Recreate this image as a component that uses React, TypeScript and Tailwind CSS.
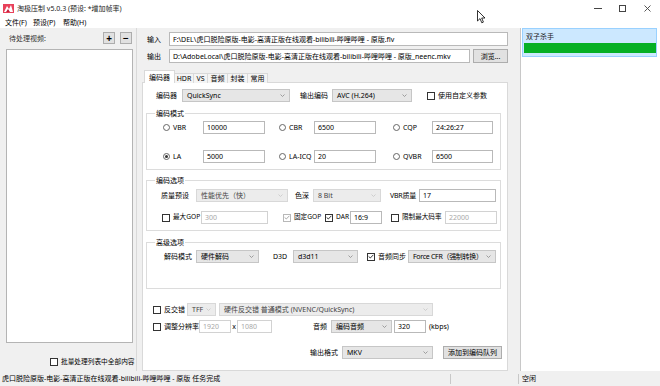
import React from 'react';

type Ctl = { className?: string; disabled?: boolean };

const Chevron = ({ light }: { light?: boolean }) => (
  <svg width="5" height="3" viewBox="0 0 5 3" className="shrink-0">
    <path d="M0.5 0.5L2.5 2.5L4.5 0.5" fill="none" stroke={light ? '#c6c6c6' : '#8a8a8a'} strokeWidth="0.8" />
  </svg>
);

const TextBox = ({ value, className = '', disabled }: Ctl & { value: string }) => (
  <div
    className={`h-[13px] shrink-0 border bg-white flex items-center px-[3px] overflow-hidden ${
      disabled ? 'border-[#d2d2d2] text-[#a8a8a8]' : 'border-[#b9b9b9] text-black'
    } ${className}`}
  >
    <span className="whitespace-nowrap">{value}</span>
  </div>
);

const Combo = ({ value, className = '', disabled }: Ctl & { value: string }) => (
  <div
    className={`h-[13px] shrink-0 border flex items-center justify-between pl-[4px] pr-[4px] overflow-hidden ${
      disabled ? 'bg-[#ececec] border-[#d8d8d8] text-[#444]' : 'bg-[#e6e6e6] border-[#c6c6c6] text-black'
    } ${className}`}
  >
    <span className="whitespace-nowrap">{value}</span>
    <Chevron light={disabled} />
  </div>
);

const Check = ({ label, checked, disabled, className = '' }: Ctl & { label: string; checked?: boolean }) => (
  <div className={`flex items-center shrink-0 ${className}`}>
    <div
      className={`w-[8px] h-[8px] shrink-0 border bg-white flex items-center justify-center ${
        disabled ? 'border-[#b8b8b8]' : 'border-[#333333]'
      }`}
    >
      {checked && (
        <svg width="6" height="5" viewBox="0 0 6 5">
          <path d="M0.6 2.4L2.3 4L5.4 0.8" fill="none" stroke={disabled ? '#a0a0a0' : '#222'} strokeWidth="0.9" />
        </svg>
      )}
    </div>
    <span className="ml-[3px] whitespace-nowrap">{label}</span>
  </div>
);

const Radio = ({ label, checked, className = '' }: Ctl & { label: string; checked?: boolean }) => (
  <div className={`flex items-center shrink-0 ${className}`}>
    <div className="w-[7px] h-[7px] rounded-full border border-[#666] bg-white flex items-center justify-center">
      {checked && <div className="w-[3px] h-[3px] rounded-full bg-[#333]" />}
    </div>
    <span className="ml-[3px] whitespace-nowrap">{label}</span>
  </div>
);

const Label = ({ text, className = '' }: { text: string; className?: string }) => (
  <div className={`shrink-0 whitespace-nowrap ${className}`}>{text}</div>
);

const Group = ({ title, className = '', children }: { title: string; className?: string; children: React.ReactNode }) => (
  <div className={`relative border border-[#dcdcdc] ${className}`}>
    <span className="absolute -top-[4px] left-[8px] bg-white px-[1px]">{title}</span>
    {children}
  </div>
);

const AppIcon = () => (
  <svg width="11" height="11" viewBox="0 0 11 11" className="shrink-0">
    <rect x="0" y="1" width="11" height="9" fill="#e8415a" />
    <path d="M1 9L4 3L6 6L8 2L10 9Z" fill="#ffffff" />
    <path d="M3 9L5 6L7 9Z" fill="#c81e3c" />
  </svg>
);

const tabs = [
  { name: 'HDR', w: 'w-[20px]' },
  { name: 'VS', w: 'w-[15px]' },
  { name: '音频', w: 'w-[21px]' },
  { name: '封装', w: 'w-[21px]' },
  { name: '常用', w: 'w-[21px]' },
];

export default function App() {
  return (
    <div className="w-[660px] h-[386px] overflow-hidden bg-[#f0f0f0] text-black text-[7px] leading-none flex flex-col relative font-['Noto_Sans','Noto_Sans_CJK_SC',sans-serif]">
      {/* title bar */}
      <div className="h-[16px] bg-white flex items-center shrink-0">
        <div className="ml-[3px]">
          <AppIcon />
        </div>
        <span className="ml-[3px] text-[#222]">淘极压制 v5.0.3 (预设: *增加帧率)</span>
        <div className="ml-auto flex items-center h-full">
          <div className="w-[25px] h-full flex items-center justify-center">
            <svg width="8" height="1" viewBox="0 0 8 1">
              <rect width="8" height="1" fill="#444" />
            </svg>
          </div>
          <div className="w-[25px] h-full flex items-center justify-center">
            <svg width="7" height="7" viewBox="0 0 7 7">
              <rect x="0.5" y="0.5" width="6" height="6" fill="none" stroke="#444" strokeWidth="1" />
            </svg>
          </div>
          <div className="w-[25px] h-full flex items-center justify-center">
            <svg width="7" height="7" viewBox="0 0 7 7">
              <path d="M0.5 0.5L6.5 6.5M6.5 0.5L0.5 6.5" stroke="#444" strokeWidth="0.9" />
            </svg>
          </div>
        </div>
      </div>

      {/* menu bar */}
      <div className="h-[12px] bg-white flex items-center shrink-0 pl-[5px]">
        <Label text="文件(F)" className="w-[28px]" />
        <Label text="预设(P)" className="w-[30px]" />
        <Label text="帮助(H)" />
      </div>

      {/* main */}
      <div className="flex flex-1 min-h-0">
        {/* queue */}
        <div className="w-[137px] shrink-0 border-r border-[#d9d9d9] flex flex-col">
          <div className="mt-[4px] h-[12px] flex items-center">
            <Label text="待处理视频:" className="ml-[9px] text-[#333]" />
            <div className="ml-auto mr-[4px] flex gap-[5px]">
              <div className="w-[12px] h-[12px] bg-[#e1e1e1] border border-[#adadad] flex items-center justify-center text-[10px] font-bold">+</div>
              <div className="w-[12px] h-[12px] bg-[#e1e1e1] border border-[#adadad] flex items-center justify-center text-[10px] font-bold">−</div>
            </div>
          </div>
          <div className="mt-[5px] ml-[6px] w-[127px] h-[294px] bg-white border border-[#b4b4b4]" />
          <Check label="批量处理列表中全部内容" className="mt-[15px] ml-[50px] text-[6.7px]" />
        </div>

        {/* settings */}
        <div className="w-[383px] shrink-0 flex flex-col">
          <div className="mt-[4px] h-[14px] flex items-center pl-[10px]">
            <Label text="输入" className="w-[22px]" />
            <TextBox className="w-[339px] h-[14px]" value="F:\DEL\虎口脱险原版-电影-高清正版在线观看-bilibili-哔哩哔哩 - 原版.flv" />
          </div>
          <div className="mt-[3px] h-[14px] flex items-center pl-[10px]">
            <Label text="输出" className="w-[22px]" />
            <TextBox className="w-[301px] h-[14px]" value="D:\AdobeLocal\虎口脱险原版-电影-高清正版在线观看-bilibili-哔哩哔哩 - 原版_neenc.mkv" />
            <div className="ml-[3px] w-[35px] h-[14px] bg-[#e1e1e1] border border-[#adadad] flex items-center justify-center">浏览...</div>
          </div>

          {/* tabs */}
          <div className="mt-[8px] ml-[7px] h-[12px] flex items-end relative z-10 -mb-[1px]">
            <div className="w-[31px] h-[13px] bg-white border border-b-0 border-[#d9d9d9] flex items-center justify-center">编码器</div>
            {tabs.map((t) => (
              <div key={t.name} className={`${t.w} -ml-[1px] h-[10px] bg-[#f4f4f4] border border-b-0 border-[#d9d9d9] flex items-center justify-center`}>
                {t.name}
              </div>
            ))}
          </div>

          <div className="ml-[5px] w-[366px] flex-1 bg-white border border-[#d9d9d9] flex flex-col">
            {/* encoder row */}
            <div className="mt-[6px] flex items-center pl-[13px]">
              <Label text="编码器" className="w-[26px]" />
              <Combo className="w-[108px]" value="QuickSync" />
              <Label text="输出编码" className="ml-[10px] w-[32px]" />
              <Combo className="w-[80px]" value="AVC (H.264)" />
              <Check label="使用自定义参数" className="ml-[15px]" />
            </div>

            <Group title="编码模式" className="mt-[11px] ml-[3px] w-[355px] pt-[7px] pb-[6px]">
              <div className="flex items-center pl-[16px]">
                <Radio label="VBR" className="w-[40px]" />
                <TextBox className="w-[62px]" value="10000" />
                <Radio label="CBR" className="ml-[14px] w-[35px]" />
                <TextBox className="w-[62px]" value="6500" />
                <Radio label="CQP" className="ml-[17px] w-[39px]" />
                <TextBox className="w-[61px]" value="24:26:27" />
              </div>
              <div className="mt-[16px] flex items-center pl-[16px]">
                <Radio label="LA" checked className="w-[40px]" />
                <TextBox className="w-[62px]" value="5000" />
                <Radio label="LA-ICQ" className="ml-[14px] w-[35px]" />
                <TextBox className="w-[62px]" value="20" />
                <Radio label="QVBR" className="ml-[17px] w-[39px]" />
                <TextBox className="w-[61px]" value="6500" />
              </div>
            </Group>

            <Group title="编码选项" className="mt-[10px] ml-[3px] w-[355px] pt-[8px] pb-[6px]">
              <div className="flex items-center pl-[14px]">
                <Label text="质量预设" className="w-[35px]" />
                <Combo disabled className="w-[92px]" value="性能优先（快）" />
                <Label text="色深" className="ml-[7px] w-[18px]" />
                <Combo disabled className="w-[68px]" value="8 Bit" />
                <Label text="VBR质量" className="ml-[9px] w-[29px] tracking-[-0.2px]" />
                <TextBox className="w-[77px]" value="17" />
              </div>
              <div className="mt-[9px] flex items-center pl-[15px]">
                <Check label="最大GOP" className="w-[39px] text-[6.6px]" />
                <TextBox disabled className="w-[67px]" value="300" />
                <Check label="固定GOP" checked disabled className="ml-[15px] w-[42px] text-[6.6px]" />
                <Check label="DAR" checked className="w-[25px] text-[6.6px]" />
                <TextBox className="w-[32px]" value="16:9" />
                <Check label="限制最大码率" className="ml-[9px] w-[54px] text-[6.6px]" />
                <TextBox disabled className="w-[52px]" value="22000" />
              </div>
            </Group>

            <Group title="高级选项" className="mt-[11px] ml-[3px] w-[355px] pt-[7px] pb-[25px]">
              <div className="flex items-center pl-[17px]">
                <Label text="解码模式" className="w-[32px]" />
                <Combo className="w-[63px]" value="硬件解码" />
                <Label text="D3D" className="ml-[14px] w-[20px]" />
                <Combo className="w-[65px]" value="d3d11" />
                <Check label="音频同步" checked className="ml-[9px] w-[41px]" />
                <Combo className="w-[88px] tracking-[-0.3px]" value="Force CFR（强制转换）" />
              </div>
            </Group>

            <div className="mt-[14px] flex items-center pl-[10px]">
              <Check label="反交错" className="w-[34px]" />
              <Combo disabled className="w-[29px]" value="TFF" />
              <Combo disabled className="ml-[3px] w-[214px]" value="硬件反交错 普通模式 (NVENC/QuickSync)" />
            </div>
            <div className="mt-[4px] flex items-center pl-[10px]">
              <Check label="调整分辨率" className="w-[46px]" />
              <TextBox disabled className="w-[32px]" value="1920" />
              <Label text="x" className="w-[6px] text-center" />
              <TextBox disabled className="w-[35px]" value="1080" />
              <Label text="音频" className="ml-[41px] w-[18px]" />
              <Combo className="w-[61px]" value="编码音频" />
              <TextBox className="ml-[2px] w-[32px]" value="320" />
              <Label text="(kbps)" className="ml-[3px]" />
            </div>
            <div className="mt-[13px] flex items-center pl-[167px]">
              <Label text="输出格式" className="w-[32px]" />
              <Combo className="w-[91px]" value="MKV" />
              <div className="ml-[10px] w-[59px] h-[13px] bg-[#e1e1e1] border border-[#adadad] flex items-center justify-center">添加到编码队列</div>
            </div>
          </div>
        </div>

        {/* job list */}
        <div className="w-[140px] shrink-0 bg-white border-l border-[#c8c8c8] pl-[1px]">
          <div className="w-[135px] h-[29px] bg-[#cce8ff] border border-[#99d1ff] flex flex-col">
            <span className="mt-[4px] ml-[3px] text-[#222]">双子杀手</span>
            <div className="mt-[3px] ml-[1px] w-[132px] h-[10px] bg-[#06b025]" />
          </div>
        </div>
      </div>

      {/* status bar */}
      <div className="h-[15px] shrink-0 flex items-center">
        <span className="w-[450px] pl-[2px] whitespace-nowrap">虎口脱险原版-电影-高清正版在线观看-bilibili-哔哩哔哩 - 原版 任务完成</span>
        <div className="w-px h-[10px] bg-[#c8c8c8]" />
        <div className="w-[67px]" />
        <div className="w-px h-[10px] bg-[#c8c8c8]" />
        <span className="ml-[3px]">空闲</span>
      </div>

      {/* mouse pointer */}
      <svg width="9" height="14" viewBox="0 0 9 14" className="absolute left-[477px] top-[10px]">
        <path d="M0.5 0.5L0.5 11L3 8.6L4.8 12.8L6.4 12.1L4.7 8H8Z" fill="#fff" stroke="#000" strokeWidth="0.8" strokeLinejoin="round" />
      </svg>
    </div>
  );
}
